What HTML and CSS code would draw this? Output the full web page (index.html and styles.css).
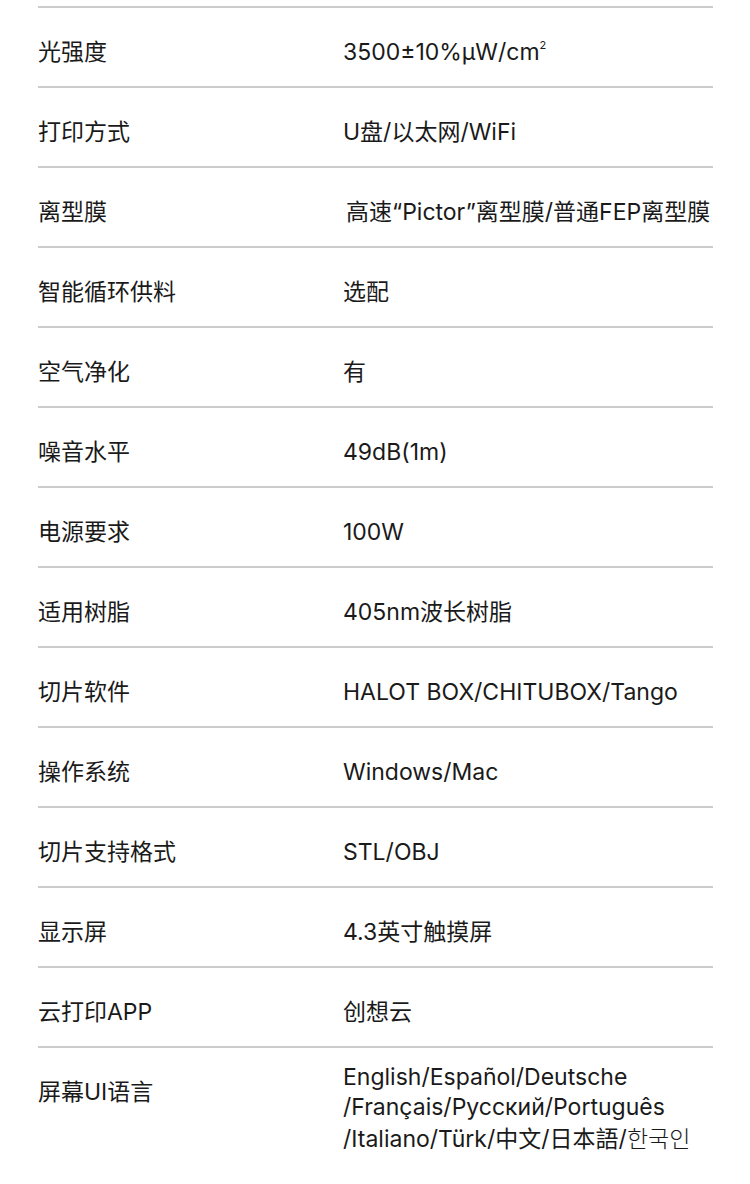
FILE: index.html
```html
<!DOCTYPE html>
<html lang="zh-CN">
<head>
  <meta charset="UTF-8" />
  <meta name="viewport" content="width=device-width, initial-scale=1.0" />
  <title>参数</title>
  <link rel="stylesheet" href="styles.css">
</head>
<body>
  <div class="spec-table">
    <div class="row"><div class="label">光强度</div><div class="value">3500±10%μW/cm<sup>2</sup></div></div>
    <div class="row"><div class="label">打印方式</div><div class="value">U盘/以太网/WiFi</div></div>
    <div class="row"><div class="label">离型膜</div><div class="value shift">高速“Pictor”离型膜/普通FEP离型膜</div></div>
    <div class="row"><div class="label">智能循环供料</div><div class="value">选配</div></div>
    <div class="row"><div class="label">空气净化</div><div class="value">有</div></div>
    <div class="row"><div class="label">噪音水平</div><div class="value">49dB(1m)</div></div>
    <div class="row"><div class="label">电源要求</div><div class="value">100W</div></div>
    <div class="row"><div class="label">适用树脂</div><div class="value">405nm波长树脂</div></div>
    <div class="row"><div class="label">切片软件</div><div class="value">HALOT BOX/CHITUBOX/Tango</div></div>
    <div class="row"><div class="label">操作系统</div><div class="value">Windows/Mac</div></div>
    <div class="row"><div class="label">切片支持格式</div><div class="value">STL/OBJ</div></div>
    <div class="row"><div class="label">显示屏</div><div class="value">4.3英寸触摸屏</div></div>
    <div class="row"><div class="label">云打印APP</div><div class="value">创想云</div></div>
    <div class="row multi">
      <div class="label">屏幕UI语言</div>
      <div class="value">English/Español/Deutsche<br>/Français/Pyccкий/Português<br>/Italiano/Türk/中文/日本語/<span class="ko">한국인</span></div>
    </div>
  </div>
</body>
</html>
```

FILE: styles.css
```css
body {
  margin: 0;
  background: #ffffff;
  font-family: "Inter", "Noto Sans CJK SC", sans-serif;
  color: #1a1a1a;
}

.spec-table {
  width: 675px;
  margin-left: 38px;
  padding-top: 6px;
}

.row {
  display: flex;
  align-items: center;
  box-sizing: border-box;
  height: 80px;
  padding-top: 9px;
  border-top: 2px solid #cccccc;
  font-size: 23px;
  line-height: 30px;
}

.label {
  width: 305px;
  flex-shrink: 0;
}

.value {
  white-space: nowrap;
}

.value.shift {
  margin-left: 3px;
}

.value sup {
  font-size: 11px;
  line-height: 0;
  vertical-align: 11px;
}

.row.multi {
  height: auto;
  align-items: flex-start;
  padding-top: 5px;
  padding-bottom: 30px;
}

.row.multi .label {
  padding-top: 24px;
}

.row.multi .value {
  padding-top: 9px;
}

.ko {
  font-family: "Noto Sans CJK KR", sans-serif;
  font-weight: 300;
}
```
